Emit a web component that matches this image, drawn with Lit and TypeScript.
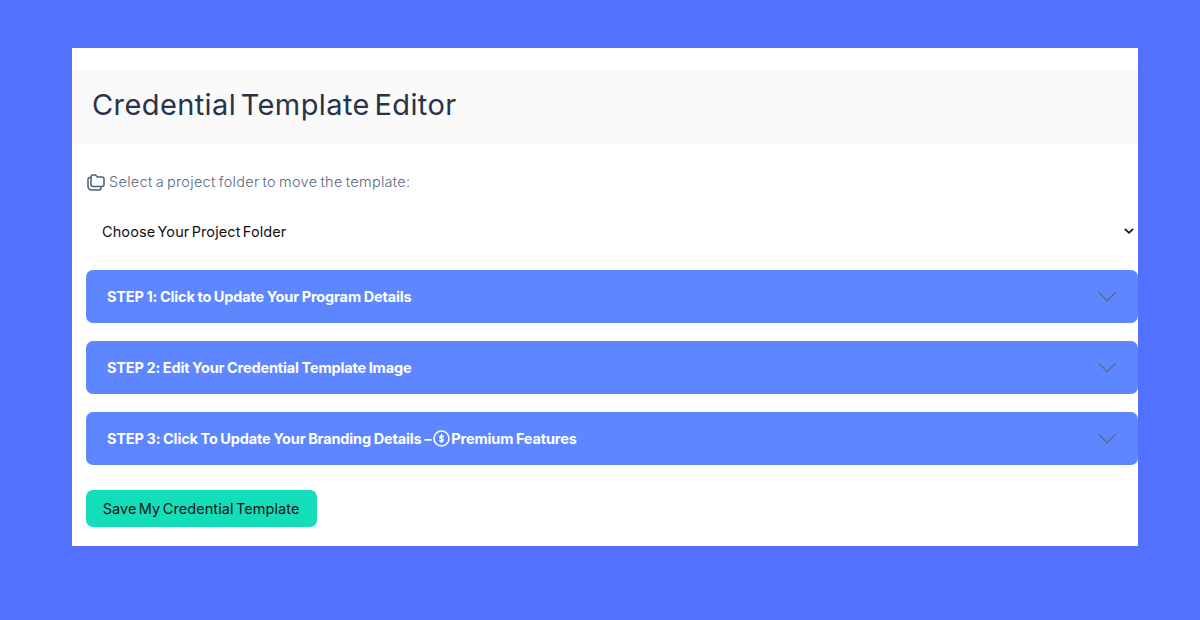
import { LitElement, html, css } from "lit";
import { customElement } from "lit/decorators.js";

@customElement("step-bar")
class StepBar extends LitElement {
  static styles = css`
    :host {
      display: flex;
      align-items: center;
      justify-content: space-between;
      box-sizing: border-box;
      height: 53px;
      padding: 0 22px 0 21px;
      border-radius: 7px;
      background: #5e87ff;
      color: #fff;
      font-size: 14.5px;
      font-weight: 700;
      letter-spacing: -0.15px;
      word-spacing: -0.6px;
      white-space: nowrap;
    }
    .label {
      display: flex;
      align-items: center;
    }
    .chevron {
      display: block;
      width: 18px;
      height: 10px;
    }
  `;
  render() {
    return html`
      <span class="label"><slot></slot></span>
      <svg class="chevron" viewBox="0 0 18 10" fill="none" stroke="#5a6b8f" stroke-width="1.3" stroke-linecap="round" stroke-linejoin="round">
        <path d="M1.2 .8L9.2 8.8L17.2 .8" />
      </svg>
    `;
  }
}

@customElement("app-root")
class AppRoot extends LitElement {
  static styles = css`
    :host {
      display: block;
      box-sizing: border-box;
      width: 1200px;
      height: 620px;
      padding: 48px 62px 0 72px;
      background: #5271ff;
      font-family: Inter, sans-serif;
    }
    .card {
      box-sizing: border-box;
      height: 497.5px;
      padding-top: 22px;
      background: #fff;
    }
    .header {
      display: flex;
      align-items: center;
      box-sizing: border-box;
      height: 74px;
      padding: 0 20px 4px;
      background: #fafafa;
    }
    h1 {
      margin: 0;
      color: #273449;
      font-size: 29px;
      font-weight: 400;
      line-height: 40px;
      letter-spacing: 0.4px;
      word-spacing: -4px;
      white-space: nowrap;
    }
    .body {
      display: flex;
      flex-direction: column;
      padding-left: 14px;
    }
    .hint {
      display: flex;
      align-items: center;
      gap: 4px;
      height: 20px;
      margin-top: 28px;
      color: #5b6a82;
      font-size: 14.5px;
      font-weight: 300;
      letter-spacing: 0.3px;
      word-spacing: -1.3px;
      white-space: nowrap;
    }
    .hint-text {
      padding-bottom: 2px;
    }
    .folders {
      width: 18px;
      height: 17px;
      margin-left: 1px;
    }
    .select {
      display: flex;
      align-items: center;
      justify-content: space-between;
      height: 20px;
      margin-top: 29px;
      padding: 0 4px 0 16px;
      color: #111;
      font-size: 14.5px;
      letter-spacing: 0.1px;
      word-spacing: -1.9px;
      white-space: nowrap;
    }
    .caret {
      width: 10px;
      height: 6px;
    }
    .steps {
      display: flex;
      flex-direction: column;
      gap: 18px;
      margin-top: 29px;
    }
    .coin {
      width: 17px;
      height: 17px;
      margin: 0 1px 0 2px;
    }
    .save {
      align-self: flex-start;
      width: 231px;
      height: 37px;
      margin: 25px 0 0 -0.4px;
      padding: 0;
      border: 0;
      border-radius: 7px;
      background: #14deba;
      color: #111;
      font: 400 14.5px Inter, sans-serif;
      letter-spacing: 0.08px;
      word-spacing: -1.8px;
      white-space: nowrap;
    }
  `;
  render() {
    return html`
      <main class="card">
        <header class="header"><h1>Credential Template Editor</h1></header>
        <section class="body">
          <div class="hint">
            <svg class="folders" viewBox="0 0 18 17" fill="none" stroke="#4b5f7d" stroke-width="1.5" stroke-linejoin="round" stroke-linecap="round">
              <path d="M4 3Q4 1 6 1H8.5L10.5 3H15Q17 3 17 5V10.5Q17 12.5 15 12.5H6Q4 12.5 4 10.5Z" />
              <path d="M3.8 3.5H3Q1 3.5 1 5.5V12Q1 16 5 16H12Q14 16 14 14V12.8" />
            </svg>
            <span class="hint-text">Select a project folder to move the template:</span>
          </div>
          <div class="select">
            <span class="choice">Choose Your Project Folder</span>
            <svg class="caret" viewBox="0 0 10 6" fill="none" stroke="#111" stroke-width="1.7"><path d="M.8 .8L5 4.8L9.2 .8" /></svg>
          </div>
          <div class="steps">
            <step-bar><span>STEP 1: Click to Update Your Program Details</span></step-bar>
            <step-bar><span>STEP 2: Edit Your Credential Template Image</span></step-bar>
            <step-bar>
              <span>STEP 3: Click To Update Your Branding Details –</span>
              <svg class="coin" viewBox="0 0 17 17" fill="none" stroke="#fff" stroke-width="1.5" stroke-linecap="round">
                <circle cx="8.5" cy="8.5" r="7.5" />
                <path d="M10.3 6.8C10 5.8 6.8 5.5 6.8 7.2C6.8 8.8 10.3 8.2 10.3 10C10.3 11.6 7 11.4 6.7 10.2M8.5 4.5V12.5" />
              </svg>
              <span>Premium Features</span>
            </step-bar>
          </div>
          <button class="save">Save My Credential Template</button>
        </section>
      </main>
    `;
  }
}
